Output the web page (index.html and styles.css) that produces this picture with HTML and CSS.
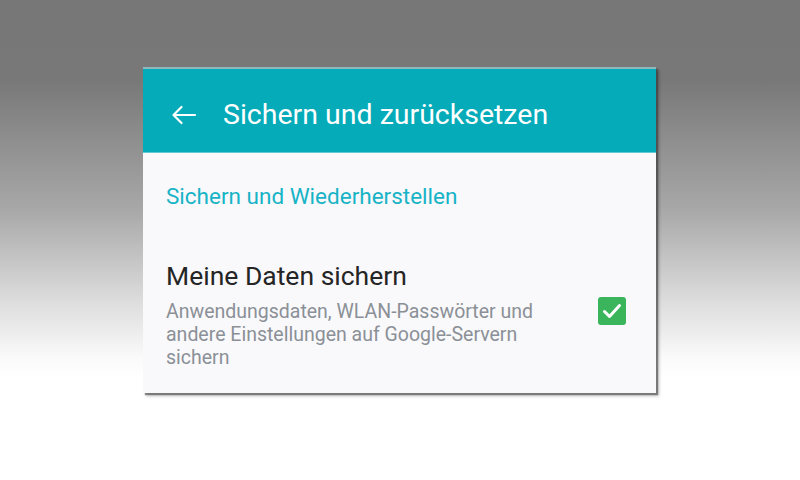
FILE: index.html
```html
<!DOCTYPE html>
<html lang="de">
<head>
<meta charset="utf-8">
<link rel="stylesheet" href="styles.css">
</head>
<body>
<div class="stage">
  <div class="card">
    <div class="appbar">
      <svg class="back" width="26" height="26" viewBox="0 0 26 26"><path d="M24 13H2.5M10.5 5L2.5 13L10.5 21" fill="none" stroke="#fff" stroke-width="2.2" stroke-linecap="round" stroke-linejoin="round"/></svg>
      <div class="title">Sichern und zurücksetzen</div>
    </div>
    <div class="content">
      <div class="section">Sichern und Wiederherstellen</div>
      <div class="row">
        <div class="texts">
          <div class="primary">Meine Daten sichern</div>
          <div class="secondary">Anwendungsdaten, WLAN-Passwörter und andere Einstellungen auf Google-Servern sichern</div>
        </div>
        <div class="check">
          <svg width="28" height="28" viewBox="0 0 28 28"><path d="M6.5 14.5L11.5 19.5L21.5 8.5" fill="none" stroke="#fff" stroke-width="3" stroke-linecap="round" stroke-linejoin="round"/></svg>
        </div>
      </div>
    </div>
  </div>
</div>
</body>
</html>
```
FILE: styles.css
```css
html, body {
  margin: 0;
  padding: 0;
}
body {
  width: 800px;
  height: 480px;
  overflow: hidden;
  font-family: Roboto, "Noto Sans", sans-serif;
  background: linear-gradient(to bottom, #777777 0px, #787878 80px, #a8a8a8 210px, #dcdcdc 300px, #fbfbfb 360px, #ffffff 380px);
}
.stage {
  padding: 67px 0 0 143px;
}
.card {
  width: 513px;
  height: 326px;
  background: #f9f9fb;
  border-top: 2px solid #8fb8bc;
  box-sizing: border-box;
  box-shadow: 2px 2px 1px rgba(60,60,60,0.55), 3px 3px 3px rgba(0,0,0,0.25);
  display: flex;
  flex-direction: column;
}
.appbar {
  height: 84px;
  box-sizing: border-box;
  flex-shrink: 0;
  background: #05abb8;
  display: flex;
  align-items: center;
  padding-left: 28px;
  padding-top: 8px;
  border-bottom: 1px solid #5fc8d0;
}
.back {
  width: 26px;
  height: 26px;
}
.title {
  margin-left: 26px;
  color: #ffffff;
  font-size: 28.5px;
}
.content {
  padding: 30px 30px 0 23px;
}
.section {
  color: #17b3c6;
  font-size: 22.5px;
  line-height: 26px;
}
.row {
  margin-top: 52px;
  display: flex;
  align-items: flex-start;
  justify-content: space-between;
}
.texts {
  width: 410px;
}
.primary {
  color: #252525;
  font-size: 26.5px;
  line-height: 30px;
}
.secondary {
  color: #8b9097;
  font-size: 19.5px;
  line-height: 23px;
  margin-top: 9px;
}
.check {
  width: 28px;
  height: 28px;
  background: #3bb55c;
  border-radius: 3px;
  margin-top: 36px;
}
.check svg {
  display: block;
}
```
